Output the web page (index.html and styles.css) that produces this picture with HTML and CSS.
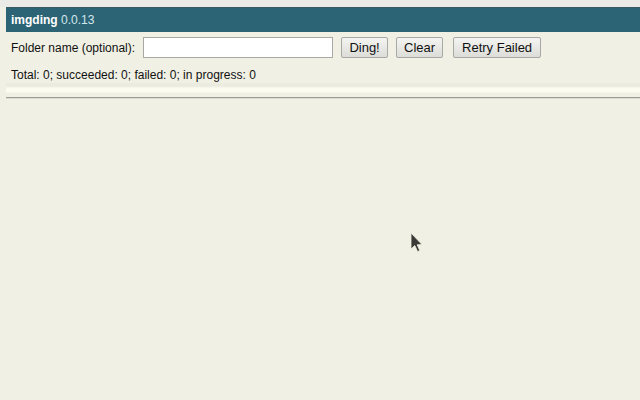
FILE: index.html
```html
<!DOCTYPE html>
<html>
<head>
<meta charset="utf-8">
<link rel="stylesheet" href="styles.css">
</head>
<body>
<div class="topstrip"></div>
<div class="page">
  <div class="header"><b>imgding</b> <span class="ver">0.0.13</span></div>
  <div class="controls">
    <label class="lbl">Folder name (optional):</label>
    <input class="folder" type="text">
    <button class="btn b1">Ding!</button>
    <button class="btn b2">Clear</button>
    <button class="btn b3">Retry Failed</button>
  </div>
  <div class="status">Total: 0; succeeded: 0; failed: 0; in progress: 0</div>
  <div class="progress"></div>
  <div class="rule"></div>
</div>
<svg class="cursor" width="14" height="22" viewBox="0 0 14 22"><path d="M1 1 L1 17 L4.8 13.6 L7.6 19.6 L9.8 18.6 L7.2 12.8 L12 12.6 Z" fill="#3a3a36" stroke="#f0f0e4" stroke-width="0.8"/></svg>
</body>
</html>
```

FILE: styles.css
```css
html, body {
  margin: 0;
  padding: 0;
  background: #f0f0e4;
  font-family: "Liberation Sans", Arial, sans-serif;
  font-size: 12px;
  color: #111;
  height: 100%;
}
.topstrip {
  height: 7px;
  background: #eaebe6;
}
.page {
  padding-left: 6px;
}
.header {
  height: 25px;
  line-height: 25px;
  background: #2c6475;
  border-top: 1px solid #3c5a62;
  box-sizing: border-box;
  color: #fff;
  padding-left: 5px;
}
.ver {
  color: #d4e6ee;
}
.controls {
  display: flex;
  align-items: center;
  padding: 5px 0 0 5px;
  height: 21px;
}
.lbl {
  margin-right: 8px;
}
.folder {
  width: 190px;
  height: 21px;
  box-sizing: border-box;
  border: 1px solid #a9a9a4;
  background: #fff;
  margin: 0 8px 0 0;
  padding: 0;
}
.btn {
  height: 21px;
  box-sizing: border-box;
  font-family: "Liberation Sans", Arial, sans-serif;
  font-size: 13px;
  color: #111;
  border: 1px solid #a8a8a4;
  border-radius: 2px;
  background: linear-gradient(#f4f4f2, #dcdcd8);
  padding: 0 7px;
  margin: 0;
}
.b1 { width: 47px; margin-right: 8px; }
.b2 { width: 47px; margin-right: 10px; }
.b3 { width: 88px; }
.status {
  padding: 8px 0 0 5px;
  height: 17px;
  line-height: 18px;
}
.progress {
  height: 10px;
  background: linear-gradient(#ebebdf 0, #ebebdf 3px, #f0f0e4 4px, #fcfcf0 5px, #fcfcf0 9px, #f0f0e4 10px);
}
.rule {
  margin-top: 4px;
  height: 1px;
  background: #9c9c94;
  border-bottom: 1px solid #dcdcd2;
}
.cursor {
  position: absolute;
  left: 410px;
  top: 232px;
}
```
